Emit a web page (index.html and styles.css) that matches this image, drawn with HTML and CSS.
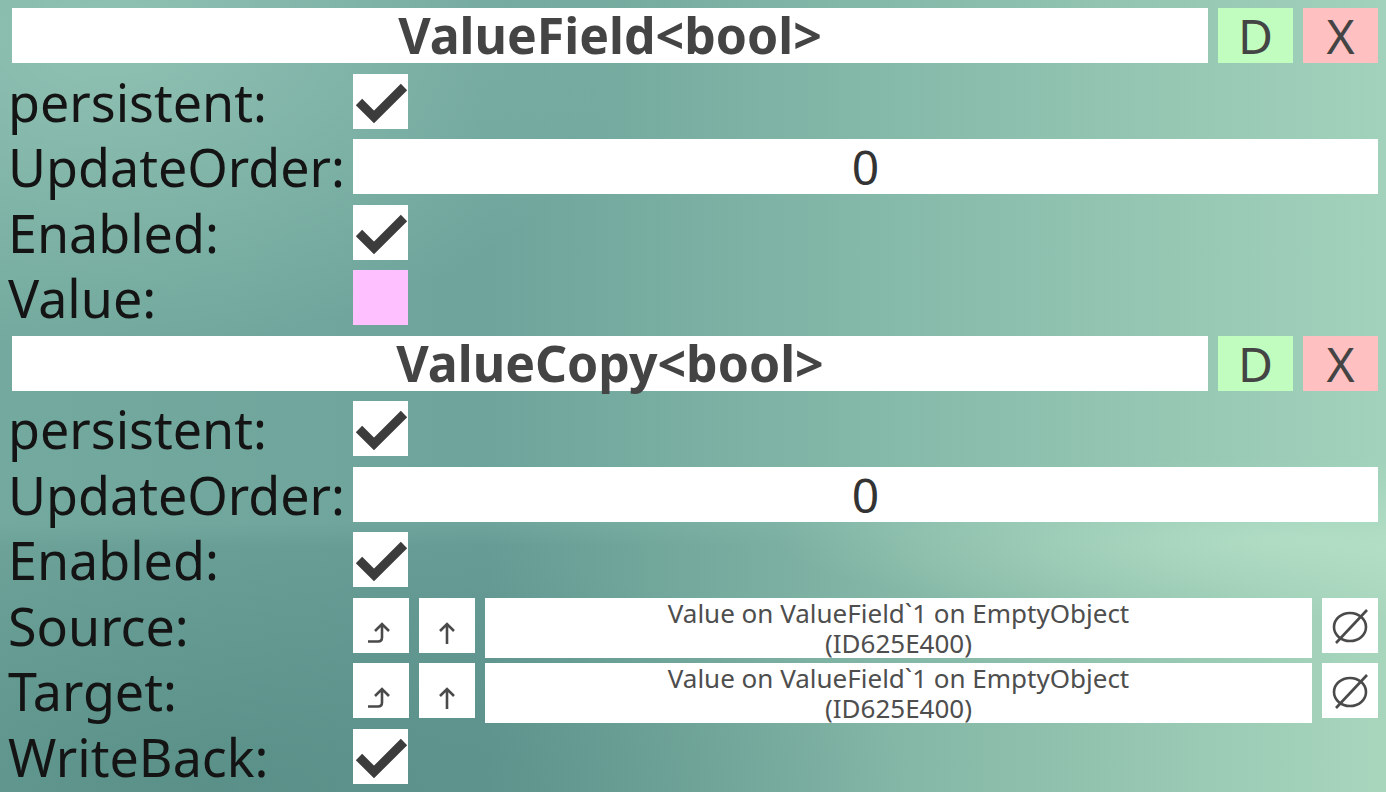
FILE: index.html
```html
<!DOCTYPE html>
<html lang="en">
<head>
  <meta charset="UTF-8" />
  <meta name="viewport" content="width=device-width, initial-scale=1.0"/>
  <title>Inspector</title>
  <link rel="stylesheet" href="styles.css">
</head>
<body>
  <div class="inspector">

    <!-- ValueField<bool> -->
    <div class="comp-header">
      <div class="comp-title">ValueField&lt;bool&gt;</div>
      <div class="btn btn-dup">D</div>
      <div class="btn btn-del">X</div>
    </div>
    <div class="field-row">
      <div class="label">persistent:</div>
      <div class="value"><div class="checkbox"><svg viewBox="0 0 55 55"><polyline points="6,28 21,43 51,13"/></svg></div></div>
    </div>
    <div class="field-row">
      <div class="label">UpdateOrder:</div>
      <div class="value"><div class="text-field">0</div></div>
    </div>
    <div class="field-row">
      <div class="label">Enabled:</div>
      <div class="value"><div class="checkbox"><svg viewBox="0 0 55 55"><polyline points="6,28 21,43 51,13"/></svg></div></div>
    </div>
    <div class="field-row">
      <div class="label">Value:</div>
      <div class="value"><div class="checkbox unchecked"></div></div>
    </div>

    <!-- ValueCopy<bool> -->
    <div class="comp-header">
      <div class="comp-title">ValueCopy&lt;bool&gt;</div>
      <div class="btn btn-dup">D</div>
      <div class="btn btn-del">X</div>
    </div>
    <div class="field-row">
      <div class="label">persistent:</div>
      <div class="value"><div class="checkbox"><svg viewBox="0 0 55 55"><polyline points="6,28 21,43 51,13"/></svg></div></div>
    </div>
    <div class="field-row">
      <div class="label">UpdateOrder:</div>
      <div class="value"><div class="text-field">0</div></div>
    </div>
    <div class="field-row">
      <div class="label">Enabled:</div>
      <div class="value"><div class="checkbox"><svg viewBox="0 0 55 55"><polyline points="6,28 21,43 51,13"/></svg></div></div>
    </div>
    <div class="field-row">
      <div class="label">Source:</div>
      <div class="value">
        <div class="icon-btn"><svg viewBox="0 0 55 55"><path class="line" d="M15 43.5 H25 Q29 43.5 29 39.5 V26 M22 33 L29 26 L36 33"/></svg></div>
        <div class="icon-btn"><svg viewBox="0 0 55 55"><path class="line" d="M28 26 V46 M21 33 L28 26 L35 33"/></svg></div>
        <div class="ref-field">Value on ValueField`1 on EmptyObject<br>(ID625E400)</div>
        <div class="icon-btn"><svg viewBox="0 0 55 55"><ellipse class="line" cx="28" cy="29" rx="16" ry="14"/><path class="line" d="M14 45 L45 12"/></svg></div>
      </div>
    </div>
    <div class="field-row">
      <div class="label">Target:</div>
      <div class="value">
        <div class="icon-btn"><svg viewBox="0 0 55 55"><path class="line" d="M15 43.5 H25 Q29 43.5 29 39.5 V26 M22 33 L29 26 L36 33"/></svg></div>
        <div class="icon-btn"><svg viewBox="0 0 55 55"><path class="line" d="M28 26 V46 M21 33 L28 26 L35 33"/></svg></div>
        <div class="ref-field">Value on ValueField`1 on EmptyObject<br>(ID625E400)</div>
        <div class="icon-btn"><svg viewBox="0 0 55 55"><ellipse class="line" cx="28" cy="29" rx="16" ry="14"/><path class="line" d="M14 45 L45 12"/></svg></div>
      </div>
    </div>
    <div class="field-row">
      <div class="label">WriteBack:</div>
      <div class="value"><div class="checkbox"><svg viewBox="0 0 55 55"><polyline points="6,28 21,43 51,13"/></svg></div></div>
    </div>

  </div>
</body>
</html>
```

FILE: styles.css
```css
html, body {
  margin: 0;
  height: 792px;
  overflow: hidden;
}
body {
  font-family: 'Noto Sans', 'Open Sans', sans-serif;
  color: #141414;
  background:
    radial-gradient(ellipse 520px 320px at 8% 4%, rgba(175, 220, 200, 0.5), rgba(175, 220, 200, 0)),
    radial-gradient(ellipse 500px 80px at 92% 68%, rgba(190, 232, 205, 0.55), rgba(190, 232, 205, 0)),
    radial-gradient(ellipse 700px 260px at 15% 100%, rgba(70, 125, 118, 0.45), rgba(70, 125, 118, 0)),
    linear-gradient(180deg, rgba(140, 195, 180, 0.22) 0%, rgba(140, 195, 180, 0.22) 66%, rgba(140, 195, 180, 0) 69%),
    linear-gradient(90deg, #6ca298 0%, #659b94 35%, #84b7a6 65%, #a8d6bd 100%);
}
.inspector {
  display: flex;
  flex-direction: column;
  gap: 10.5px;
  padding: 8px 8px 0 8px;
}

/* component header */
.comp-header {
  display: flex;
  gap: 10px;
  height: 55px;
}
.comp-title {
  flex: 1;
  margin-left: 4px;
  background: #fff;
  color: #444;
  font-weight: bold;
  font-size: 50px;
  line-height: 55px;
  text-align: center;
  white-space: nowrap;
}
.btn {
  width: 75px;
  font-size: 48px;
  line-height: 55px;
  text-align: center;
  color: #444;
}
.btn-dup {
  background: #c0fdbf;
}
.btn-del {
  background: #fec0c0;
}

/* fields */
.field-row {
  display: grid;
  grid-template-columns: 345px 1fr;
  height: 55px;
}
.label {
  font-size: 52px;
  line-height: 55px;
  white-space: nowrap;
}
.value {
  display: flex;
  gap: 10px;
}
.checkbox {
  width: 55px;
  height: 55px;
  background: #fff;
}
.checkbox svg {
  display: block;
  width: 55px;
  height: 55px;
}
.checkbox polyline {
  fill: none;
  stroke: #3c3c3c;
  stroke-width: 9;
  stroke-linejoin: miter;
}
.checkbox.unchecked {
  background: #ffc0ff;
}
.text-field {
  flex: 1;
  background: #fff;
  color: #333;
  font-size: 48px;
  line-height: 55px;
  text-align: center;
}
.icon-btn {
  width: 56px;
  height: 55px;
  background: #fff;
}
.icon-btn svg {
  display: block;
  width: 55px;
  height: 55px;
}
.icon-btn .line {
  fill: none;
  stroke: #4a4a4a;
  stroke-width: 2.6;
}
.ref-field {
  flex: 1;
  background: #fff;
  color: #4e4e4e;
  font-size: 26px;
  line-height: 30px;
  text-align: center;
  display: flex;
  flex-direction: column;
  justify-content: center;
  white-space: nowrap;
}
```
